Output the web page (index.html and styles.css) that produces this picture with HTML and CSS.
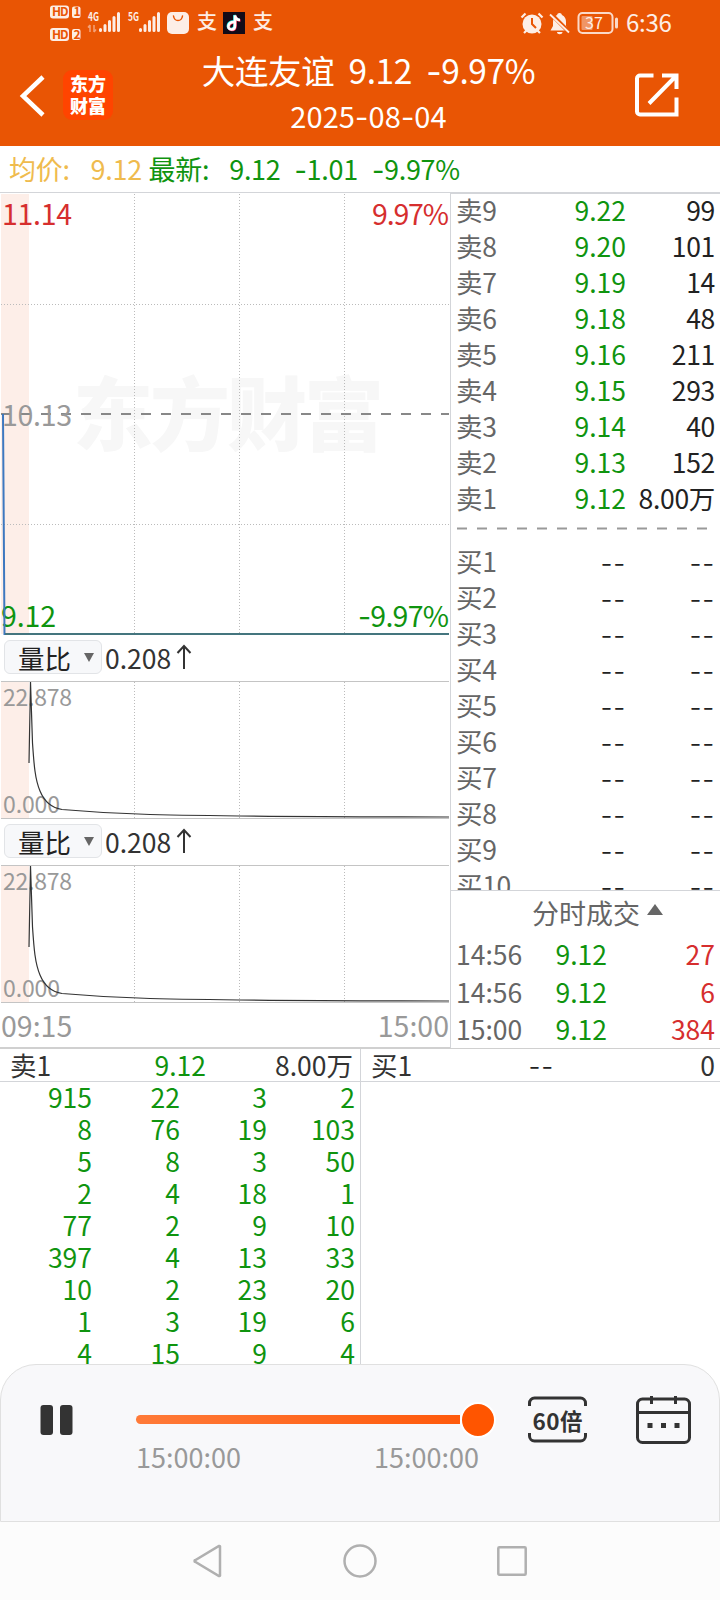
FILE: index.html
```html
<!DOCTYPE html>
<html lang="zh-CN">
<head>
    <meta charset="UTF-8">
    <meta name="viewport" content="width=device-width, initial-scale=1.0">
    <title>大连友谊</title>
    <link rel="stylesheet" href="styles.css">
</head>
<body>
    <header class="header">
        <div class="status-bar">
            <svg class="status-left" width="240" height="46" viewBox="0 0 240 46">
                <g fill="#fdeee6">
                    <rect x="10" y="5.500" width="19" height="13" rx="3"/>
                    <rect x="32" y="6.500" width="8.500" height="11.500" rx="2"/>
                    <rect x="10" y="28" width="19" height="13" rx="3"/>
                    <rect x="32" y="29" width="8.500" height="11" rx="2"/>
                </g>
                <g class="hd-text">
                    <text x="12" y="16">HD</text>
                    <text x="33.500" y="16">1</text>
                    <text x="12" y="38.500">HD</text>
                    <text x="33.500" y="38.500">2</text>
                </g>
                <text class="net-text" x="48" y="20.500" textLength="11" lengthAdjust="spacingAndGlyphs">4G</text>
                <text class="net-text" x="88" y="20.500" textLength="11" lengthAdjust="spacingAndGlyphs">5G</text>
                <path d="M50 25v7M50 25l-2 2.500M54 25v7M54 32l2-2.500" stroke="#f3a27a" stroke-width="1.500" fill="none"/>
                <g stroke="#fdeee6" stroke-width="3" stroke-linecap="round">
                    <path d="M60.500 29.500v1M65 25.500v5M69.500 21.500v9M74 17.500v13M78.500 13.500v17"/>
                    <path d="M100.500 29.500v1M105 25.500v5M109.500 21.500v9M114 17.500v13M118.500 13.500v17"/>
                </g>
                <rect x="127" y="12" width="22" height="22" rx="5" fill="#fdeee6"/>
                <path d="M133.500 16c1 6 8 6 9 0" fill="none" stroke="#e95504" stroke-width="1.500" stroke-linecap="round"/>
                <text class="pay-text" x="157" y="29">支</text>
                <text class="pay-text" x="213" y="29">支</text>
                <rect x="183" y="12" width="22" height="22" fill="#120b18"/>
                <g fill="none" stroke-width="2.600">
                    <path d="M194 21.500c-7-.5-8 7.500-3 7.500 2.500 0 3.500-1.500 3.500-4V15c.5 3 2 4.500 5 4.500" stroke="#25f4ee"/>
                    <path d="M195 22.500c-7-.5-8 7.500-3 7.500 2.500 0 3.500-1.500 3.500-4V16c.5 3 2 4.500 5 4.500" stroke="#fe2c55"/>
                    <path d="M194.500 22c-7-.5-8 7.500-3 7.500 2.500 0 3.500-1.500 3.500-4V15.500c.5 3 2 4.500 5 4.500" stroke="#fff"/>
                </g>
            </svg>
            <div class="status-right">
                <svg width="100" height="46" viewBox="0 0 100 46">
                    <circle cx="12" cy="24" r="9.500" fill="#fdeee6"/>
                    <path d="M1.500 17.500l4-4M22.500 17.500l-4-4M4 33l3-3M20 33l-3-3" stroke="#fdeee6" stroke-width="2.200"/>
                    <path d="M12 18v6l4 4" stroke="#e95504" stroke-width="2" fill="none"/>
                    <path d="M39.500 13a2.500 2.500 0 0 1 2.500 2c3 1.500 4 4 4 7v4l2.500 4.500h-18L33 26v-4c0-3 1-5.500 4-7a2.500 2.500 0 0 1 2.500-2zM37 32h5.500c0 3-5.500 3-5.500 0z" fill="#fdeee6"/>
                    <path d="M31 14l18 18" stroke="#e95504" stroke-width="4"/>
                    <path d="M30 14.500l19 18" stroke="#fdeee6" stroke-width="1.800"/>
                    <rect x="58.500" y="13" width="34" height="20" rx="4" fill="none" stroke="#fbd9c8" stroke-width="2"/>
                    <rect x="61.500" y="16" width="11" height="14" rx="1" fill="#f09565"/>
                    <path d="M96.500 19v8" stroke="#fbd9c8" stroke-width="3" stroke-linecap="round"/>
                    <text class="battery-text" x="65" y="28.500">37</text>
                </svg>
                <span class="clock">6:36</span>
            </div>
        </div>
        <div class="title-bar">
            <svg class="back" width="26" height="42" viewBox="0 0 26 42"><path d="M24 2L4 21l20 19" fill="none" stroke="#fff" stroke-width="4.500"/></svg>
            <div class="logo">东方<br>财富</div>
            <div class="title">
                <h1>大连友谊&nbsp; 9.12&nbsp; <span class="dash">-</span>9.97%</h1>
                <p>2025<span class="dash">-</span>08<span class="dash">-</span>04</p>
            </div>
            <svg class="share" width="44" height="44" viewBox="0 0 44 44">
                <path d="M18.500 2.500H5a3 3 0 0 0-3 3v33a3 3 0 0 0 3 3h36.500V24.500M27 2.500h14.500V16M41 3L14 30.500" fill="none" stroke="#fff" stroke-width="4"/>
            </svg>
        </div>
    </header>

    <div class="quote-bar">
        <span class="avg">均价:</span><span class="avg avg-value">9.12</span>
        <span class="green">最新:</span><span class="green last">9.12</span><span class="green change"><span class="dash">-</span>1.01</span><span class="green"><span class="dash">-</span>9.97%</span>
    </div>

    <main class="main">
        <section class="charts">
            <svg class="price-chart" width="450" height="443" viewBox="0 193 450 443">
                <rect x="1" y="194" width="28" height="440" fill="#fdeee8"/>
                <text class="watermark" x="73" y="444" textLength="311">东方财富</text>
                <path class="grid" d="M134.500 194V634M239.500 194V634M344.500 194V634M1 304.500H449M1 524.500H449"/>
                <path d="M1 414H449" stroke="#888" stroke-width="2" stroke-dasharray="10 10"/>
                <text class="axis red" x="2" y="224.500" textLength="70">11.14</text>
                <text class="axis red" x="372" y="224.500" textLength="77">9.97%</text>
                <text class="axis gray" x="2" y="426" textLength="70">10.13</text>
                <text class="axis green-text" x="1" y="627" textLength="55">9.12</text>
                <text class="axis green-text" x="358" y="627" textLength="91"><tspan class="dash">-</tspan>9.97%</text>
                <path d="M3 414L4.500 634H449" fill="none" stroke="#3d78c0" stroke-width="2"/>
                <path d="M5 634H449" stroke="#477568" stroke-width="1.500"/>
            </svg>

            <div class="indicator-bar">
                <button class="indicator">量比 <i class="arrow-down"></i></button>
                <span class="indicator-value">0.208</span>
                <svg width="16" height="26" viewBox="0 0 16 26"><path d="M8 25V2M1.500 9L8 2l6.500 7" fill="none" stroke="#333" stroke-width="2"/></svg>
            </div>
            <svg class="ratio-chart" width="450" height="138" viewBox="0 0 450 138">
                <rect x="1" y="0" width="28" height="138" fill="#fdeee8"/>
                <path class="grid" d="M134.500 1V137M239.500 1V137M344.500 1V137"/>
                <path d="M1 .5H449M1 137.500H449" stroke="#c4c4c4"/>
                <text class="axis small gray" x="3" y="25" textLength="69">22.878</text>
                <text class="axis small gray" x="3" y="132" textLength="57">0.000</text>
                <path d="M29 82L30.500 1 32.500 62C34 84 35 98 40 110C45 122 52 127 62 128.500C90 131 110 132.500 150 133.500C230 135.500 300 135.500 449 136" fill="none" stroke="#333" stroke-width="1.200"/>
            </svg>

            <div class="indicator-bar">
                <button class="indicator">量比 <i class="arrow-down"></i></button>
                <span class="indicator-value">0.208</span>
                <svg width="16" height="26" viewBox="0 0 16 26"><path d="M8 25V2M1.500 9L8 2l6.500 7" fill="none" stroke="#333" stroke-width="2"/></svg>
            </div>
            <svg class="ratio-chart" width="450" height="138" viewBox="0 0 450 138">
                <rect x="1" y="0" width="28" height="138" fill="#fdeee8"/>
                <path class="grid" d="M134.500 1V137M239.500 1V137M344.500 1V137"/>
                <path d="M1 .5H449M1 137.500H449" stroke="#c4c4c4"/>
                <text class="axis small gray" x="3" y="25" textLength="69">22.878</text>
                <text class="axis small gray" x="3" y="132" textLength="57">0.000</text>
                <path d="M29 82L30.500 1 32.500 62C34 84 35 98 40 110C45 122 52 127 62 128.500C90 131 110 132.500 150 133.500C230 135.500 300 135.500 449 136" fill="none" stroke="#333" stroke-width="1.200"/>
            </svg>

            <div class="time-axis"><span>09:15</span><span>15:00</span></div>
        </section>

        <aside class="side">
            <div class="order-book">
                <div class="order"><span>卖9</span><b>9.22</b><em>99</em></div>
                <div class="order"><span>卖8</span><b>9.20</b><em>101</em></div>
                <div class="order"><span>卖7</span><b>9.19</b><em>14</em></div>
                <div class="order"><span>卖6</span><b>9.18</b><em>48</em></div>
                <div class="order"><span>卖5</span><b>9.16</b><em>211</em></div>
                <div class="order"><span>卖4</span><b>9.15</b><em>293</em></div>
                <div class="order"><span>卖3</span><b>9.14</b><em>40</em></div>
                <div class="order"><span>卖2</span><b>9.13</b><em>152</em></div>
                <div class="order"><span>卖1</span><b>9.12</b><em>8.00万</em></div>
                <svg class="divider" width="269" height="27" viewBox="0 0 269 27"><path d="M6 10.500H258" stroke="#999" stroke-width="2" stroke-dasharray="10 10"/></svg>
                <div class="order buy"><span>买1</span><b>--</b><em>--</em></div>
                <div class="order buy"><span>买2</span><b>--</b><em>--</em></div>
                <div class="order buy"><span>买3</span><b>--</b><em>--</em></div>
                <div class="order buy"><span>买4</span><b>--</b><em>--</em></div>
                <div class="order buy"><span>买5</span><b>--</b><em>--</em></div>
                <div class="order buy"><span>买6</span><b>--</b><em>--</em></div>
                <div class="order buy"><span>买7</span><b>--</b><em>--</em></div>
                <div class="order buy"><span>买8</span><b>--</b><em>--</em></div>
                <div class="order buy"><span>买9</span><b>--</b><em>--</em></div>
                <div class="order buy"><span>买10</span><b>--</b><em>--</em></div>
            </div>
            <div class="trades">
                <h2>分时成交 <i class="arrow-up"></i></h2>
                <div class="trade"><span>14:56</span><b>9.12</b><em>27</em></div>
                <div class="trade"><span>14:56</span><b>9.12</b><em>6</em></div>
                <div class="trade"><span>15:00</span><b>9.12</b><em>384</em></div>
            </div>
        </aside>
    </main>

    <section class="queues">
        <div class="queue sell">
            <div class="queue-head"><span>卖1</span><b>9.12</b><em>8.00万</em></div>
            <div class="queue-grid">
                <span>915</span><span>22</span><span>3</span><span>2</span>
                <span>8</span><span>76</span><span>19</span><span>103</span>
                <span>5</span><span>8</span><span>3</span><span>50</span>
                <span>2</span><span>4</span><span>18</span><span>1</span>
                <span>77</span><span>2</span><span>9</span><span>10</span>
                <span>397</span><span>4</span><span>13</span><span>33</span>
                <span>10</span><span>2</span><span>23</span><span>20</span>
                <span>1</span><span>3</span><span>19</span><span>6</span>
                <span>4</span><span>15</span><span>9</span><span>4</span>
            </div>
        </div>
        <div class="queue">
            <div class="queue-head empty"><span>买1</span><b>--</b><em>0</em></div>
        </div>
    </section>

    <section class="player">
        <svg class="pause" width="34" height="32" viewBox="0 0 34 32">
            <rect x="0.500" y="1" width="12.500" height="30" rx="3" fill="#333"/>
            <rect x="20" y="1" width="12.500" height="30" rx="3" fill="#333"/>
        </svg>
        <div class="slider">
            <div class="track"><div class="fill"></div><div class="thumb"></div></div>
            <div class="times"><span>15:00:00</span><span>15:00:00</span></div>
        </div>
        <svg class="speed" width="60" height="48" viewBox="0 0 60 48">
            <path d="M1.500 10V7a5 5 0 0 1 5-5h46a5 5 0 0 1 5 5v3M1.500 37v3a5 5 0 0 0 5 5h46a5 5 0 0 0 5-5v-3" fill="none" stroke="#333" stroke-width="3"/>
            <text x="4.500" y="33.500" textLength="50">60倍</text>
        </svg>
        <svg class="calendar" width="56" height="50" viewBox="0 0 56 50">
            <rect x="1.500" y="4" width="52" height="43.500" rx="5" fill="none" stroke="#333" stroke-width="3"/>
            <path d="M2 17.500H53M15.500 1v8M39.500 1v8" stroke="#333" stroke-width="3"/>
            <path d="M11.500 30.500h5M25 30.500h5M38.500 30.500h5" stroke="#333" stroke-width="5"/>
        </svg>
    </section>

    <nav class="nav-bar">
        <svg width="30" height="34" viewBox="0 0 30 34"><path d="M27 2.500v29a.8.8 0 0 1-1 .5L2.500 18a1 1 0 0 1 0-2L26 2a.8.800 0 0 1 1 .5z" fill="none" stroke="#b0b0b0" stroke-width="2.500"/></svg>
        <svg width="34" height="34" viewBox="0 0 34 34"><circle cx="17" cy="17" r="15.500" fill="none" stroke="#b0b0b0" stroke-width="2.500"/></svg>
        <svg width="30" height="34" viewBox="0 0 30 34"><rect x="1.300" y="3.300" width="27.400" height="27.400" rx="1" fill="none" stroke="#b0b0b0" stroke-width="2.500"/></svg>
    </nav>
</body>
</html>
```
FILE: styles.css
```css
* {
    box-sizing: border-box;
}

body {
    margin: 0;
    width: 720px;
    height: 1600px;
    overflow: hidden;
    display: flex;
    flex-direction: column;
    background-color: #fff;
    font-family: 'Noto Sans CJK SC', sans-serif;
    font-size: 26.5px;
    color: #333;
}

h1, h2, p {
    margin: 0;
    font-weight: normal;
}

b, em, i {
    font-weight: normal;
    font-style: normal;
}

svg {
    display: block;
    flex: none;
}

.dash {
    font-family: 'Inter', sans-serif;
}

.green {
    color: #0f940f;
}

/* header */
.header {
    height: 146px;
    flex: none;
    background-color: #e95504;
    color: #fff;
}

.status-bar {
    height: 46px;
    padding: 0 48px 0 40px;
    display: flex;
    justify-content: space-between;
}

.status-right {
    display: flex;
    gap: 6px;
}

.clock {
    width: 46px;
    font-size: 24px;
    line-height: 44px;
    letter-spacing: -0.3px;
    color: #fdeee6;
}

.hd-text {
    font-size: 12px;
    font-weight: bold;
    fill: #e95504;
    letter-spacing: -1px;
}

.net-text {
    font-size: 12px;
    font-weight: bold;
    fill: #fdeee6;
}

.pay-text {
    font-size: 20px;
    font-weight: 500;
    fill: #fdeee6;
}

.battery-text {
    font-size: 16px;
    fill: #fdeee6;
}

.title-bar {
    height: 100px;
    padding: 0 41px 0 19px;
    display: flex;
    align-items: flex-start;
}

.back {
    margin-top: 29px;
}

.logo {
    width: 50px;
    height: 50px;
    margin: 24px 0 0 18px;
    padding-top: 2px;
    border-radius: 9px;
    background-color: #ff4400;
    font-size: 18px;
    font-weight: 900;
    line-height: 22px;
    text-align: center;
}

.title {
    flex: 1;
    padding-right: 11px;
    text-align: center;
}

.title h1 {
    font-size: 33.5px;
    line-height: 47px;
    letter-spacing: -0.4px;
    white-space: nowrap;
}

.title p {
    font-size: 29px;
    line-height: 38px;
    letter-spacing: 0.1px;
}

.share {
    margin-top: 27px;
}

/* quote line */
.quote-bar {
    height: 47px;
    flex: none;
    padding-left: 9px;
    border-bottom: 1px solid #d3d5d9;
    display: flex;
    line-height: 45px;
    font-size: 27px;
    letter-spacing: -0.3px;
}

.avg {
    color: #efbb4e;
}

.avg-value {
    width: 58px;
    margin-left: 21px;
}

.last {
    margin-left: 20px;
}

.change {
    margin: 0 14px;
}

/* charts */
.main {
    height: 855px;
    flex: none;
    display: flex;
}

.charts {
    width: 450px;
}

.price-chart {
    height: 443px;
}

.grid {
    fill: none;
    stroke: #bbb;
    stroke-width: 1;
    stroke-dasharray: 1 2;
}

.watermark {
    font-size: 80px;
    font-weight: 900;
    fill: #f7f7f7;
}

.axis {
    font-size: 28.5px;
}

.axis.small {
    font-size: 23px;
}

.red {
    fill: #d62e2e;
}

.gray {
    fill: #999;
}

.green-text {
    fill: #0f940f;
}

.indicator-bar {
    height: 45px;
    padding: 4px 0 7px 4px;
    display: flex;
    align-items: center;
}

.ratio-chart + .indicator-bar {
    height: 46px;
    padding-top: 5px;
}

.indicator {
    width: 98px;
    height: 34px;
    padding: 0 7px 0 13px;
    display: flex;
    align-items: center;
    justify-content: space-between;
    border: 1px solid #e2e4e7;
    border-radius: 6px;
    background-color: #f7f8fa;
    font-family: inherit;
    font-size: 26.5px;
    line-height: 31px;
    color: #222;
}

.arrow-down {
    border: 5.5px solid transparent;
    border-top: 9px solid #666;
    border-bottom: 0;
}

.indicator-value {
    width: 65px;
    margin: 0 6px 0 3px;
    line-height: 33px;
}

.time-axis {
    height: 45px;
    padding: 0 1px 0 1px;
    display: flex;
    justify-content: space-between;
    border-bottom: 1px solid #d0d0d0;
    font-size: 28.5px;
    line-height: 44px;
    color: #999;
}

/* order book */
.side {
    width: 270px;
    border-left: 1px solid #d3d5d9;
}

.order-book {
    height: 697px;
    overflow: hidden;
    border-top: 1px solid #d3d5d9;
}

.order {
    height: 36px;
    display: grid;
    grid-template-columns: 80px 90px 1fr;
    padding: 0 5px;
    line-height: 32px;
}

.order span {
    color: #666;
    letter-spacing: -0.3px;
}

.order b {
    text-align: right;
    color: #0f940f;
}

.order em {
    text-align: right;
    white-space: nowrap;
    letter-spacing: -0.3px;
    color: #222;
}

.order.buy b,
.order.buy em {
    font-family: 'Inter', sans-serif;
    font-weight: 300;
    line-height: 36px;
    letter-spacing: 0.8px;
    color: #222;
}

.trades {
    height: 158px;
    border-top: 1px solid #d3d5d9;
}

.trades h2 {
    height: 44px;
    padding-left: 81px;
    display: flex;
    align-items: center;
    gap: 7px;
    font-size: 27px;
    line-height: 44px;
    color: #666;
}

.arrow-up {
    margin-bottom: 7px;
    border: 8px solid transparent;
    border-bottom: 11px solid #666;
    border-top: 0;
}

.trade {
    height: 37.5px;
    display: grid;
    grid-template-columns: 80px 71px 1fr;
    padding: 0 5px;
    line-height: 38px;
}

.trade span {
    color: #666;
}

.trade b {
    text-align: right;
    color: #0f940f;
}

.trade em {
    text-align: right;
    color: #d62e2e;
}

/* queues */
.queues {
    height: 316px;
    flex: none;
    display: flex;
    border-top: 1px solid #d0d0d0;
}

.queue {
    flex: 1;
}

.queue.sell {
    flex: none;
    width: 361px;
    border-right: 1px solid #d3d5d9;
}

.queue-head {
    height: 33px;
    padding: 0 7px 0 10px;
    display: grid;
    grid-template-columns: 100px 96px 1fr;
    border-bottom: 1px solid #d3d5d9;
    line-height: 31px;
}

.queue-head b {
    text-align: right;
    color: #0f940f;
}

.queue-head em {
    text-align: right;
}

.queue-head.empty {
    grid-template-columns: 100px 83px 1fr;
    padding-right: 5px;
}

.queue-head.empty b {
    font-family: 'Inter', sans-serif;
    font-weight: 300;
    line-height: 35px;
    letter-spacing: 0.8px;
    color: #222;
}

.queue-grid {
    height: 283px;
    overflow: hidden;
    display: grid;
    grid-template-columns: 92px 88px 87px 88px;
    grid-auto-rows: 32px;
    line-height: 30px;
    text-align: right;
    color: #0f940f;
}

/* player */
.player {
    height: 158px;
    flex: none;
    display: flex;
    align-items: flex-start;
    padding: 30px 27px 0 39px;
    border: 1px solid #e0e0e0;
    border-radius: 36px 36px 0 0;
    background-color: #f8f8fa;
}

.pause {
    margin-top: 9px;
}

.slider {
    width: 360px;
    margin-left: 62px;
}

.track {
    height: 49px;
    display: flex;
    align-items: center;
}

.fill {
    width: 324px;
    height: 9px;
    border-radius: 5px 0 0 5px;
    background: linear-gradient(to right, #ff7a38, #ff5a0c);
}

.thumb {
    width: 36px;
    height: 36px;
    border: 2px solid #fff;
    border-radius: 50%;
    background-color: #ff5500;
}

.times {
    width: 343px;
    display: flex;
    justify-content: space-between;
    font-size: 27px;
    line-height: 26px;
    color: #999;
}

.speed {
    margin: 1px 0 0 32px;
}

.speed text {
    font-size: 22.5px;
    font-weight: bold;
    fill: #333;
}

.calendar {
    margin-left: 48px;
}

/* system navigation */
.nav-bar {
    height: 78px;
    flex: none;
    display: flex;
    justify-content: center;
    align-items: center;
    gap: 120px;
    background-color: #fcfcfc;
}
```
